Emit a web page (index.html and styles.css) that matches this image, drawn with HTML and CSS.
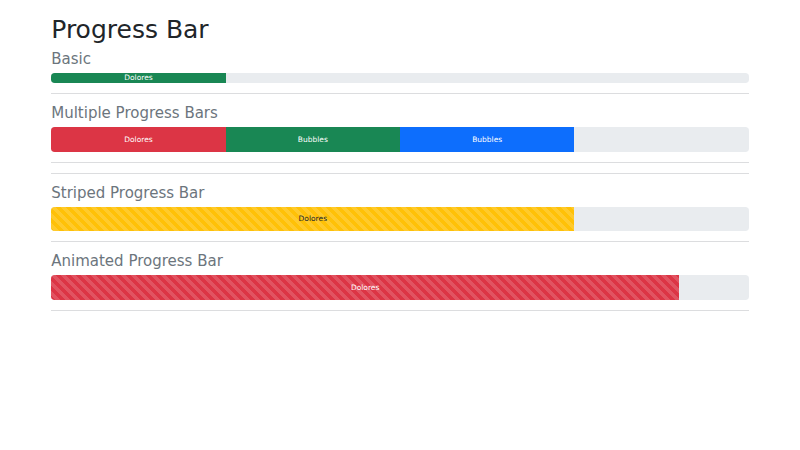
FILE: index.html
```html
<!DOCTYPE html>
<html lang="en">
<head>
<meta charset="utf-8">
<title>Progress Bar</title>
<link rel="stylesheet" href="styles.css">
</head>
<body>
<div class="container">
  <h1 class="title">Progress Bar</h1>

  <h4 class="section-title">Basic</h4>
  <div class="progress progress-thin">
    <div class="progress-bar bg-success" style="width: 25%">Dolores</div>
  </div>
  <hr>

  <h4 class="section-title">Multiple Progress Bars</h4>
  <div class="progress progress-tall">
    <div class="progress-bar bg-danger" style="width: 25%">Dolores</div>
    <div class="progress-bar bg-success" style="width: 25%">Bubbles</div>
    <div class="progress-bar bg-primary" style="width: 25%">Bubbles</div>
  </div>
  <hr>
  <hr>

  <h4 class="section-title">Striped Progress Bar</h4>
  <div class="progress progress-tall">
    <div class="progress-bar bg-warning text-dark striped" style="width: 75%">Dolores</div>
  </div>
  <hr>

  <h4 class="section-title">Animated Progress Bar</h4>
  <div class="progress progress-tall">
    <div class="progress-bar bg-danger striped animated" style="width: 90%">Dolores</div>
  </div>
  <hr>
</div>
</body>
</html>
```

FILE: styles.css
```css
* {
  box-sizing: border-box;
}

body {
  margin: 0;
  font-family: "DejaVu Sans", sans-serif;
  color: #212529;
  background: #fff;
  line-height: 1.5;
}

.container {
  max-width: 697.5px;
  margin: 0 auto;
}

.title {
  margin: 15px 0 5px;
  font-size: 25px;
  line-height: 30px;
  font-weight: 500;
  color: #212529;
}

.section-title {
  margin: 0 0 5px;
  font-size: 15px;
  line-height: 18px;
  font-weight: 500;
  color: #6c757d;
}

hr {
  margin: 10px 0;
  border: 0;
  border-top: 1px solid #dcdddf;
  height: 0;
}

/* track */
.progress {
  display: flex;
  overflow: hidden;
  background-color: #e9ecef;
  border-radius: 3.75px;
  font-size: 7.5px;
}

.progress-thin {
  height: 10px;
}

.progress-tall {
  height: 24.5px;
}

/* filled segment */
.progress-bar {
  display: flex;
  flex-direction: column;
  justify-content: center;
  overflow: hidden;
  color: #fff;
  text-align: center;
  white-space: nowrap;
}

.bg-success { background-color: #198754; }
.bg-danger { background-color: #dc3545; }
.bg-primary { background-color: #0d6efd; }
.bg-warning { background-color: #ffc107; }
.text-dark { color: #212529; }

.striped {
  background-image: linear-gradient(45deg,
    rgba(255, 255, 255, .15) 25%, transparent 25%,
    transparent 50%, rgba(255, 255, 255, .15) 50%,
    rgba(255, 255, 255, .15) 75%, transparent 75%, transparent);
  background-size: 10px 10px;
}

.animated {
  animation: stripes 1s linear infinite;
}

@keyframes stripes {
  0% { background-position-x: 10px; }
}
```
